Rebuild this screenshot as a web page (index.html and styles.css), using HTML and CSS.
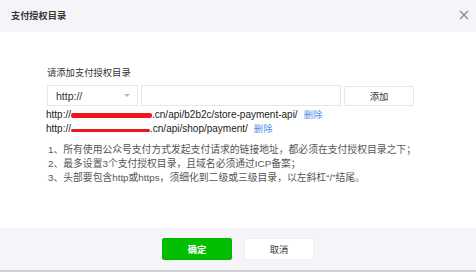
FILE: index.html
```html
<!DOCTYPE html>
<html lang="zh-CN">
<head>
<meta charset="UTF-8">
<meta name="viewport" content="width=device-width, initial-scale=1.0">
<title>支付授权目录</title>
<link rel="stylesheet" href="styles.css">
</head>
<body>

<div class="dialog">
  <div class="dialog-hd">
    <span class="dialog-title">支付授权目录</span>
    <svg class="close-btn" width="10" height="10" viewBox="0 0 10 10">
      <path d="M1 1 L9 9 M9 1 L1 9" stroke="#8d8d8d" stroke-width="1.4" fill="none"/>
    </svg>
  </div>

  <div class="dialog-bd">
    <div class="field-label">请添加支付授权目录</div>
    <div class="form-row">
      <div class="select-box">
        <span>http://</span>
        <span class="arrow"></span>
      </div>
      <input type="text" class="url-input">
      <button class="add-btn">添加</button>
    </div>

    <ul class="url-list">
      <li class="url-item">http://<span class="redact thick"></span>.cn/api/b2b2c/store-payment-api/<a class="del-link">删除</a></li>
      <li class="url-item">http://<span class="redact thin"></span>.cn/api/shop/payment/<a class="del-link">删除</a></li>
    </ul>

    <ol class="notes">
      <li>1、所有使用公众号支付方式发起支付请求的链接地址，都必须在支付授权目录之下；</li>
      <li>2、最多设置3个支付授权目录，且域名必须通过ICP备案；</li>
      <li>3、头部要包含http或https，须细化到二级或三级目录，以左斜杠“/”结尾。</li>
    </ol>
  </div>

  <div class="dialog-ft">
    <button class="btn btn-primary">确定</button>
    <button class="btn btn-default">取消</button>
  </div>
</div>

</body>
</html>
```

FILE: styles.css
```css
body {
  margin: 0;
  padding: 0;
  font-family: "Liberation Sans", Arial, "Noto Sans CJK SC", sans-serif;
  color: #333;
}
.dialog {
  width: 476px;
  height: 272px;
  display: flex;
  flex-direction: column;
  background: #fff;
}
.dialog-hd {
  height: 32px;
  padding: 0 7px 0 11px;
  background-color: #f4f4f9;
  display: flex;
  align-items: center;
  justify-content: space-between;
}
.dialog-title {
  font-size: 9.2px;
  font-weight: bold;
  color: #353535;
  margin-top: -2px;
}
.close-btn {
  margin-top: -3px;
}
.dialog-bd {
  flex: 1;
  padding: 34px 0 0 47px;
}
.field-label {
  font-size: 9.3px;
  line-height: 14px;
  color: #353535;
}
.form-row {
  display: flex;
  margin-top: 5px;
  height: 21px;
}
.select-box {
  box-sizing: border-box;
  width: 91px;
  height: 21px;
  border: 1px solid #e7e7eb;
  padding: 0 7px 0 8px;
  display: flex;
  align-items: center;
  justify-content: space-between;
  font-size: 10.5px;
}
.arrow {
  width: 0;
  height: 0;
  border-left: 3px solid transparent;
  border-right: 3px solid transparent;
  border-top: 3px solid #b8b8b8;
}
.url-input {
  box-sizing: border-box;
  width: 200px;
  height: 21px;
  margin: 0 0 0 3px;
  border: 1px solid #e7e7eb;
  padding: 0;
  outline: none;
}
.add-btn {
  box-sizing: border-box;
  width: 70px;
  height: 20px;
  margin: 1px 0 0 3px;
  border: 1px solid #e7e7eb;
  border-radius: 2px;
  background: #fff;
  font-family: inherit;
  font-size: 9.3px;
  color: #353535;
  padding: 0;
}
.url-list {
  list-style-type: none;
  margin: 2px 0 0 -1px;
  padding: 0;
}
.url-item {
  font-size: 10px;
  line-height: 14px;
  color: #222;
  white-space: nowrap;
}
.redact {
  display: inline-block;
  width: 81px;
  background-color: #f0141e;
  border-radius: 2px;
  vertical-align: middle;
}
.redact.thick {
  height: 5px;
}
.redact.thin {
  width: 79px;
  height: 3px;
  margin-top: 3px;
}
.del-link {
  margin-left: 6px;
  font-size: 9.3px;
  color: #4d90e8;
}
.notes {
  list-style-type: none;
  margin: 7px 0 0 1px;
  padding: 0;
}
.notes li {
  font-size: 9.8px;
  line-height: 14px;
  color: #555;
  white-space: nowrap;
}
.dialog-ft {
  height: 42px;
  background-color: #f4f4f9;
  border-bottom: 2px solid #cfcfd4;
  display: flex;
  justify-content: center;
  align-items: center;
  gap: 12px;
}
.btn {
  box-sizing: border-box;
  width: 70px;
  height: 22px;
  border-radius: 2px;
  font-family: inherit;
  font-size: 9.3px;
  padding: 0;
}
.btn-primary {
  background-color: #04be02;
  border: 1px solid #04b402;
  color: #fff;
  font-weight: bold;
}
.btn-default {
  background-color: #fff;
  border: 1px solid #f0f0f4;
  color: #353535;
}
```
